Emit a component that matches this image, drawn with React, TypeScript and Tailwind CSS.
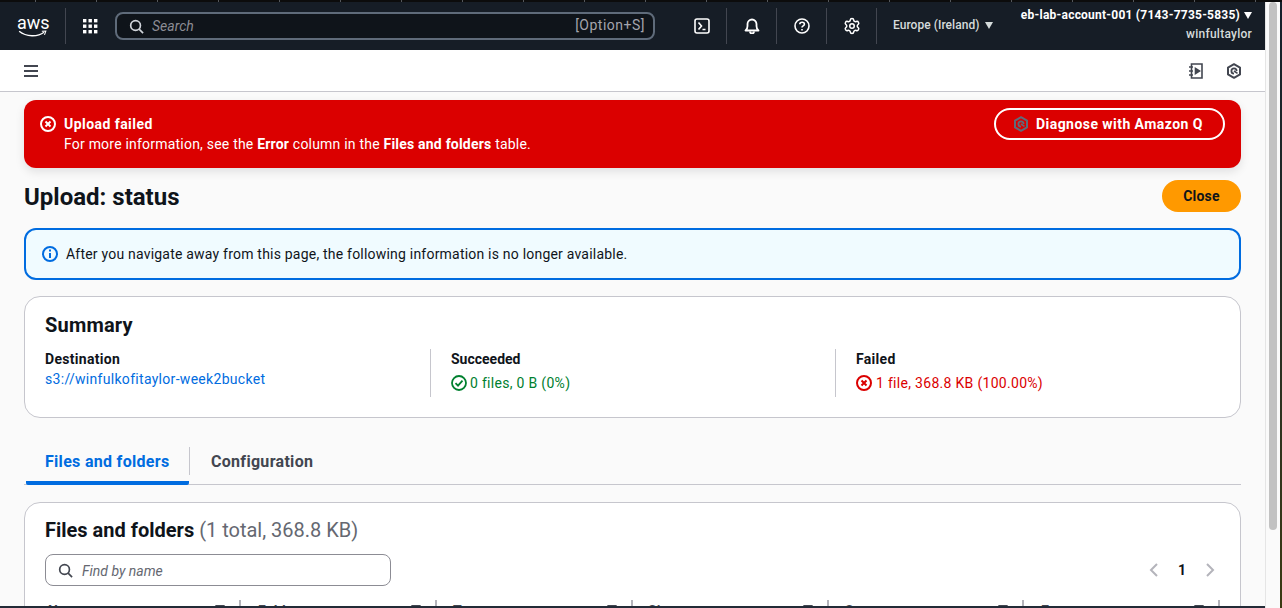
import React from 'react';
import { Settings } from 'lucide-react';

const ErrorIcon = ({ className }: { className: string }) => (
  <svg viewBox="0 0 16 16" className={className} fill="none" stroke="currentColor" strokeWidth="2">
    <circle cx="8" cy="8" r="7" />
    <path d="M5.5 5.5l5 5M10.5 5.5l-5 5" />
  </svg>
);

const SearchIcon = ({ className }: { className: string }) => (
  <svg viewBox="0 0 16 16" className={className} fill="none" stroke="currentColor" strokeWidth="1.8">
    <circle cx="7" cy="7" r="5.2" />
    <path d="M10.8 10.8L15 15" />
  </svg>
);

const QIcon = ({ className }: { className: string }) => (
  <svg viewBox="0 0 16 16" className={className} fill="none" stroke="currentColor" strokeWidth="2">
    <path d="M8 1.2l6 3.4v6.8l-6 3.4-6-3.4V4.6z" strokeLinejoin="round" />
    <path d="M10.600 8A2.600 2.600 0 1 0 8 10.600" strokeWidth="1.8" />
    <path d="M8 8l3.500 2.300" strokeWidth="1.6" />
  </svg>
);

const tabTicks = Array.from({ length: 21 }, (_, i) => i);

const columns = [
  { label: 'Name', pad: 'pl-[3px]' },
  { label: 'Folder', pad: 'pl-[17px]' },
  { label: 'Type', pad: 'pl-[16px]' },
  { label: 'Size', pad: 'pl-[15px]' },
  { label: 'Status', pad: 'pl-[16px]' },
  { label: 'Error', pad: 'pl-[17px]' },
];

export default function App() {
  return (
    <div className="w-[1282px] h-[608px] overflow-hidden flex flex-col bg-[#fafafa] font-[Roboto,sans-serif] text-sm tracking-[0.21px] text-[#0f141a]">
      {/* browser tab strip */}
      <div className="h-[2px] shrink-0 bg-[#0c0c0c] flex gap-[60px] pl-[35px]">
        {tabTicks.map(i => (
          <div key={i} className="w-px h-[2px] bg-[#55585c]" />
        ))}
      </div>

      <div className="flex-1 min-h-0 flex">
        <div className="w-[1265px] shrink-0 flex flex-col min-h-0">
          {/* top nav */}
          <header className="h-[48px] shrink-0 bg-[#161d26] flex items-center text-white">
            <div className="w-[66px] h-[36px] pl-[17px] flex flex-col items-start justify-center border-r border-[#424650]">
              <span className="text-[18px] leading-[17px] font-normal tracking-normal">aws</span>
              <svg viewBox="0 0 32 9" className="w-[31px] h-[8px] -mt-[1px]" fill="none" stroke="white">
                <path d="M1 1.5C9 8 22 8 29 2.5" strokeWidth="1.5" />
                <path d="M26.5 1.5L31 1.2 29.5 5.5" strokeWidth="1.2" />
              </svg>
            </div>
            <div className="w-[48px] flex justify-center">
              <svg viewBox="0 0 16 16" className="w-4 h-4" fill="white">
                {[1, 6.5, 12].map(y =>
                  [1, 6.5, 12].map(x => <rect key={`${x}-${y}`} x={x} y={y} width="3.4" height="3.4" />)
                )}
              </svg>
            </div>
            <div className="ml-[1px] w-[540px] h-[28px] border-2 border-[#5f6b7a] rounded-lg bg-[#0f141a] flex items-center pl-[12px] pr-[8px]">
              <SearchIcon className="w-[15px] h-[15px] text-[#d1d5db]" />
              <span className="ml-[8px] italic tracking-normal text-[#8c8c94]">Search</span>
              <span className="ml-auto text-[#a4a4ad] tracking-[0.5px] -mt-[2px]">[Option+S]</span>
            </div>
            <div className="w-[22px]" />
            <div className="flex items-center">
              <div className="w-[50px] h-[36px] flex items-center justify-center border-r border-[#424650]">
                <svg viewBox="0 0 16 16" className="w-4 h-4" fill="none" stroke="white" strokeWidth="1.6">
                  <rect x="1" y="1" width="14" height="14" rx="2" />
                  <path d="M4.5 4.5L7.5 8l-3 3.5M8.5 11.5h3" />
                </svg>
              </div>
              <div className="w-[50px] h-[36px] flex items-center justify-center border-r border-[#424650]">
                <svg viewBox="0 0 16 16" className="w-4 h-4" fill="none" stroke="white" strokeWidth="1.8">
                  <path d="M1.5 12.5h13c-1.5-1-2-2.5-2-4.5V6a4.5 4.5 0 0 0-9 0v2c0 2-.5 3.500-2 4.500z" strokeLinejoin="round" />
                  <path d="M6 13.500a2 2 0 0 0 4 0" />
                </svg>
              </div>
              <div className="w-[50px] h-[36px] flex items-center justify-center border-r border-[#424650]">
                <svg viewBox="0 0 16 16" className="w-4 h-4" fill="none" stroke="white" strokeWidth="1.6">
                  <circle cx="8" cy="8" r="7" />
                  <path d="M5.800 6.200C5.800 3.500 10.400 3.500 10.400 6.200c0 1.800-2.400 1.700-2.400 3.400" />
                  <path d="M8 11v1.500" />
                </svg>
              </div>
              <div className="w-[50px] h-[36px] flex items-center justify-center border-r border-[#424650]">
                <Settings className="w-[18px] h-[18px]" strokeWidth={2} />
              </div>
            </div>
            <div className="ml-[16px] flex items-center text-[12px] tracking-[0.05px] text-[#d5dbdb] font-medium">
              Europe (Ireland)
              <span className="ml-[6px] w-0 h-0 border-l-[4.500px] border-r-[4.500px] border-t-[7px] border-l-transparent border-r-transparent border-t-[#d5dbdb]" />
            </div>
            <div className="ml-auto pr-[13px] pb-[3px] flex flex-col items-end">
              <div className="flex items-center text-[12px] font-bold leading-[14px] tracking-[0.23px]">
                eb-lab-account-001 (7143-7735-5835)
                <span className="ml-[4px] w-0 h-0 border-l-[4.500px] border-r-[4.500px] border-t-[7px] border-l-transparent border-r-transparent border-t-white" />
              </div>
              <div className="mt-[5px] text-[12px] leading-[14px] font-medium tracking-[0.25px] text-[#d5dbdb]">winfultaylor</div>
            </div>
          </header>

          {/* breadcrumb / tools bar */}
          <div className="h-[42px] shrink-0 bg-white border-b border-[#c6c6cd] flex items-center pl-[24px] pr-[23px] text-[#424650]">
            <svg viewBox="0 0 14 12" className="w-[14px] h-[12px]" stroke="currentColor" strokeWidth="2">
              <path d="M0 1h14M0 6h14M0 11h14" />
            </svg>
            <svg viewBox="0 0 16 16" className="ml-auto w-4 h-4" fill="none" stroke="currentColor" strokeWidth="1.600">
              <path d="M3.500 1h10.500v14H3.500z" />
              <path d="M1 4h4M1 8h4M1 12h4" />
              <path d="M7.500 5.500v5l4-2.500z" fill="currentColor" />
            </svg>
            <QIcon className="ml-[22px] w-4 h-4" />
          </div>

          {/* page */}
          <main className="flex-1 min-h-0 overflow-hidden px-[24px] pt-[8px]">
            <div className="h-[68px] rounded-xl bg-[#db0000] text-white pl-[16px] pr-[16px] flex justify-between shadow-[0_4px_10px_rgba(0,7,22,0.1)]">
              <div className="flex pt-[14px]">
                <ErrorIcon className="w-4 h-4 mt-[2px]" />
                <div className="ml-[8px] leading-5">
                  <div className="font-bold tracking-[0.45px]">Upload failed</div>
                  <div>
                    For more information, see the <b>Error</b> column in the <b>Files and folders</b> table.
                  </div>
                </div>
              </div>
              <div className="pt-[8px]">
                <div className="w-[231px] h-[32px] rounded-full border-2 border-white flex items-center pl-[17px] font-bold tracking-[0.45px]">
                  <QIcon className="w-4 h-4 text-[#5f6b7a]" />
                  <span className="ml-[7px]">Diagnose with Amazon Q</span>
                </div>
              </div>
            </div>

            <div className="mt-[12px] h-[32px] flex items-center justify-between">
              <h1 className="pt-[1px] text-[24px] leading-[30px] font-bold tracking-normal">Upload: status</h1>
              <div className="w-[79px] h-[32px] rounded-full bg-[#ff9900] flex items-center justify-center font-bold">Close</div>
            </div>

            <div className="mt-[16px] h-[52px] rounded-xl border-2 border-[#006ce0] bg-[#f0fbff] flex items-center pl-[16px]">
              <svg viewBox="0 0 16 16" className="w-4 h-4 text-[#006ce0]" fill="none" stroke="currentColor" strokeWidth="2">
                <circle cx="8" cy="8" r="7" />
                <path d="M8 7v5M8 3.500v2" />
              </svg>
              <span className="ml-[8px]">After you navigate away from this page, the following information is no longer available.</span>
            </div>

            <section className="mt-[16px] h-[122px] rounded-2xl border border-[#c6c6cd] bg-white pl-[20px] pt-[15px]">
              <h2 className="text-[20px] leading-[26px] font-bold tracking-[0.2px]">Summary</h2>
              <div className="mt-[11px] grid grid-cols-[386px_405px_385px] h-[48px]">
                <div className="border-r border-[#c6c6cd]">
                  <div className="font-bold leading-5 tracking-[0.3px]">Destination</div>
                  <div className="leading-5 tracking-[0.3px] text-[#006ce0]">s3://winfulkofitaylor-week2bucket</div>
                </div>
                <div className="border-r border-[#c6c6cd] pl-[20px]">
                  <div className="font-bold leading-5 tracking-normal">Succeeded</div>
                  <div className="mt-[4px] flex items-center leading-5 tracking-[0.3px] text-[#00802f]">
                    <svg viewBox="0 0 16 16" className="w-4 h-4" fill="none" stroke="currentColor" strokeWidth="1.800">
                      <circle cx="8" cy="8" r="7" />
                      <path d="M4.500 8.200l2.500 2.500 4.500-5" />
                    </svg>
                    <span className="ml-[3px]">0 files, 0 B (0%)</span>
                  </div>
                </div>
                <div className="pl-[20px]">
                  <div className="font-bold leading-5 tracking-[0.3px]">Failed</div>
                  <div className="mt-[4px] flex items-center leading-5 tracking-[0.3px] text-[#db0000]">
                    <ErrorIcon className="w-4 h-4" />
                    <span className="ml-[4px]">1 file, 368.8 KB (100.00%)</span>
                  </div>
                </div>
              </div>
            </section>

            <div className="mt-[22px] h-[45px] border-b border-[#c6c6cd] flex pl-[2px] text-base font-bold tracking-[0.3px]">
              <div className="w-[163px] h-[45px] border-b-[4px] border-[#006ce0] rounded-b-[2px] pl-[19px] pt-[10px] leading-[24px] text-[#006ce0]">
                Files and folders
              </div>
              <div className="mt-[7px] h-[28px] border-l border-[#c6c6cd] pl-[21px] pt-[3px] leading-[24px] text-[#424650]">Configuration</div>
            </div>

            <section className="mt-[17px] h-[200px] rounded-t-2xl border border-[#c6c6cd] bg-white pl-[20px] pr-[20px] pt-[14px]">
              <h2 className="text-[20px] leading-[26px] font-bold tracking-normal">
                Files and folders <span className="font-normal text-[#656871]">(1 total, 368.8 KB)</span>
              </h2>
              <div className="mt-[11px] flex items-center justify-between">
                <div className="w-[346px] h-[32px] rounded-lg border border-[#8c8c94] bg-white flex items-center pl-[12px]">
                  <SearchIcon className="w-[15px] h-[15px] text-[#424650]" />
                  <span className="ml-[9px] pt-[1px] italic tracking-normal text-[#656871]">Find by name</span>
                </div>
                <div className="flex items-center pr-[5px]">
                  <svg viewBox="0 0 10 16" className="w-[10px] h-4 text-[#b4b4bb]" fill="none" stroke="currentColor" strokeWidth="2">
                    <path d="M8 2L2 8l6 6" />
                  </svg>
                  <span className="ml-[15px] w-[16px] text-center font-bold">1</span>
                  <svg viewBox="0 0 10 16" className="ml-[15px] w-[10px] h-4 text-[#b4b4bb]" fill="none" stroke="currentColor" strokeWidth="2">
                    <path d="M2 2l6 6-6 6" />
                  </svg>
                </div>
              </div>
              <div className="mt-[14px] grid grid-cols-[196px_196px_196px_196px_195px_196px]">
                {columns.map(col => (
                  <div key={col.label} className={`h-[24px] flex justify-between border-r-2 border-[#b4b4bb] ${col.pad} pr-[14px]`}>
                    <span className="mt-[1px] font-bold text-[#424650] leading-5">{col.label}</span>
                    <span className="mt-[5px] w-0 h-0 border-l-[5px] border-r-[5px] border-t-[7px] border-l-transparent border-r-transparent border-t-[#424650]" />
                  </div>
                ))}
              </div>
            </section>
          </main>
          <div className="h-[2px] shrink-0 bg-[#232b37]" />
        </div>

        {/* page scrollbar */}
        <div className="w-[15px] shrink-0 border-l border-[#e5e5e5] bg-[#fafafa] pl-[3px] pr-[3px]">
          <div className="w-[8px] h-[528px] rounded-full bg-[#c2c2c2]" />
        </div>
        <div className="w-[2px] shrink-0 bg-linear-to-b from-[#14202c] to-[#3b3a12]" />
      </div>
    </div>
  );
}
